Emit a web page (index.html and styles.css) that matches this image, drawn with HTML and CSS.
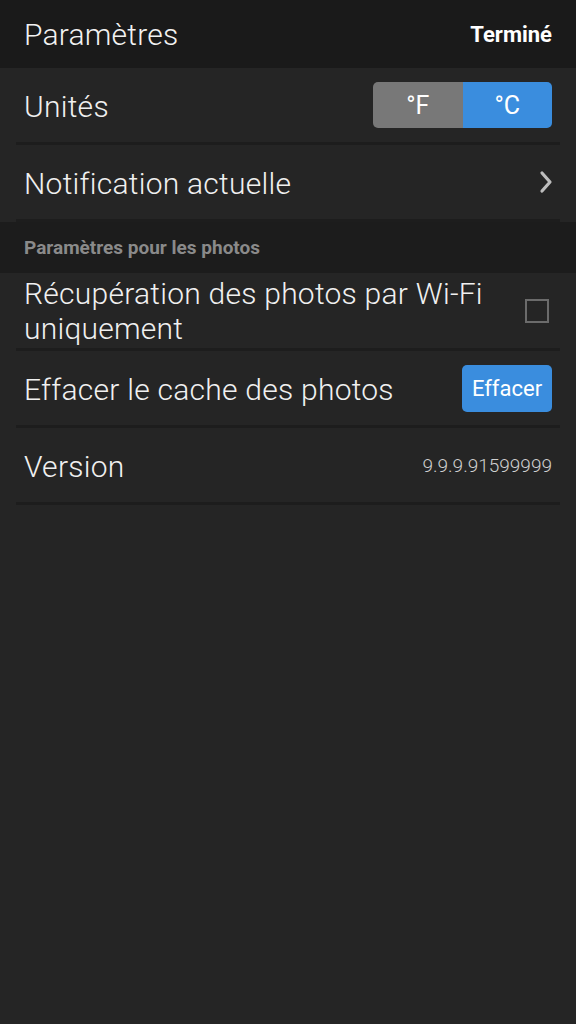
FILE: index.html
```html
<!DOCTYPE html>
<html lang="fr">
<head>
<meta charset="utf-8">
<title>Paramètres</title>
<link rel="stylesheet" href="styles.css">
</head>
<body>
<div class="screen">
  <header class="topbar">
    <h1 class="title">Paramètres</h1>
    <span class="done">Terminé</span>
  </header>

  <div class="row">
    <span class="label">Unités</span>
    <div class="segmented">
      <span class="seg seg-off">°F</span>
      <span class="seg seg-on">°C</span>
    </div>
  </div>

  <div class="row">
    <span class="label">Notification actuelle</span>
    <svg class="chevron" width="16" height="24" viewBox="0 0 16 24">
      <path d="M4 3 L12 12 L4 21" fill="none" stroke="#bdbdbd" stroke-width="3.2" stroke-linecap="round" stroke-linejoin="round"/>
    </svg>
  </div>

  <div class="section">Paramètres pour les photos</div>

  <div class="row row-tall">
    <span class="label label-wrap">Récupération des photos par Wi-Fi uniquement</span>
    <span class="checkbox"></span>
  </div>

  <div class="row">
    <span class="label">Effacer le cache des photos</span>
    <button class="btn">Effacer</button>
  </div>

  <div class="row">
    <span class="label">Version</span>
    <span class="value">9.9.9.91599999</span>
  </div>
</div>
</body>
</html>
```

FILE: styles.css
```css
html, body {
  margin: 0;
  padding: 0;
  background: #252525;
}

body {
  font-family: Roboto, "Noto Sans", "Liberation Sans", sans-serif;
  color: #f2f2f2;
}

.screen {
  width: 576px;
  min-height: 1024px;
  background: #252525;
}

.topbar {
  height: 68px;
  background: #1a1a1a;
  display: flex;
  align-items: center;
  justify-content: space-between;
  padding: 0 24px;
  box-sizing: border-box;
}

.title {
  margin: 0;
  font-size: 30px;
  font-weight: 300;
  color: #f2f2f2;
  letter-spacing: 0.2px;
}

.done {
  font-size: 22px;
  font-weight: 700;
  color: #ffffff;
}

.row {
  margin: 0 16px;
  padding: 0 8px;
  height: 74px;
  border-bottom: 3px solid #1d1d1d;
  display: flex;
  align-items: center;
  justify-content: space-between;
}

.row-tall {
  height: 75px;
}

.label {
  font-size: 30px;
  font-weight: 300;
  color: #f0f0f0;
  line-height: 35px;
  letter-spacing: 0.25px;
  padding-top: 3px;
}

.label-wrap {
  max-width: 480px;
  padding-top: 0;
}

.segmented {
  display: flex;
  width: 179px;
  height: 46px;
  border-radius: 5px;
  overflow: hidden;
}

.seg {
  flex: 1;
  display: flex;
  align-items: center;
  justify-content: center;
  font-size: 25px;
  font-weight: 400;
  color: #ffffff;
}

.seg-off {
  background: #787878;
}

.seg-on {
  background: #3a8dde;
}

.chevron {
  display: block;
  margin-right: -2px;
}

.section {
  height: 51px;
  background: #1c1c1c;
  padding: 0 24px;
  display: flex;
  align-items: center;
  font-size: 19px;
  font-weight: 700;
  color: #8a8a8a;
}

.checkbox {
  width: 20px;
  height: 20px;
  border: 2px solid #6b6b6b;
  margin-right: 3px;
}

.btn {
  width: 90px;
  height: 47px;
  border: none;
  border-radius: 5px;
  background: #3a8dde;
  color: #ffffff;
  font-family: Roboto, "Noto Sans", "Liberation Sans", sans-serif;
  font-size: 22px;
  font-weight: 400;
  padding: 0;
}

.value {
  font-size: 19px;
  font-weight: 300;
  color: #d0d0d0;
}
```
